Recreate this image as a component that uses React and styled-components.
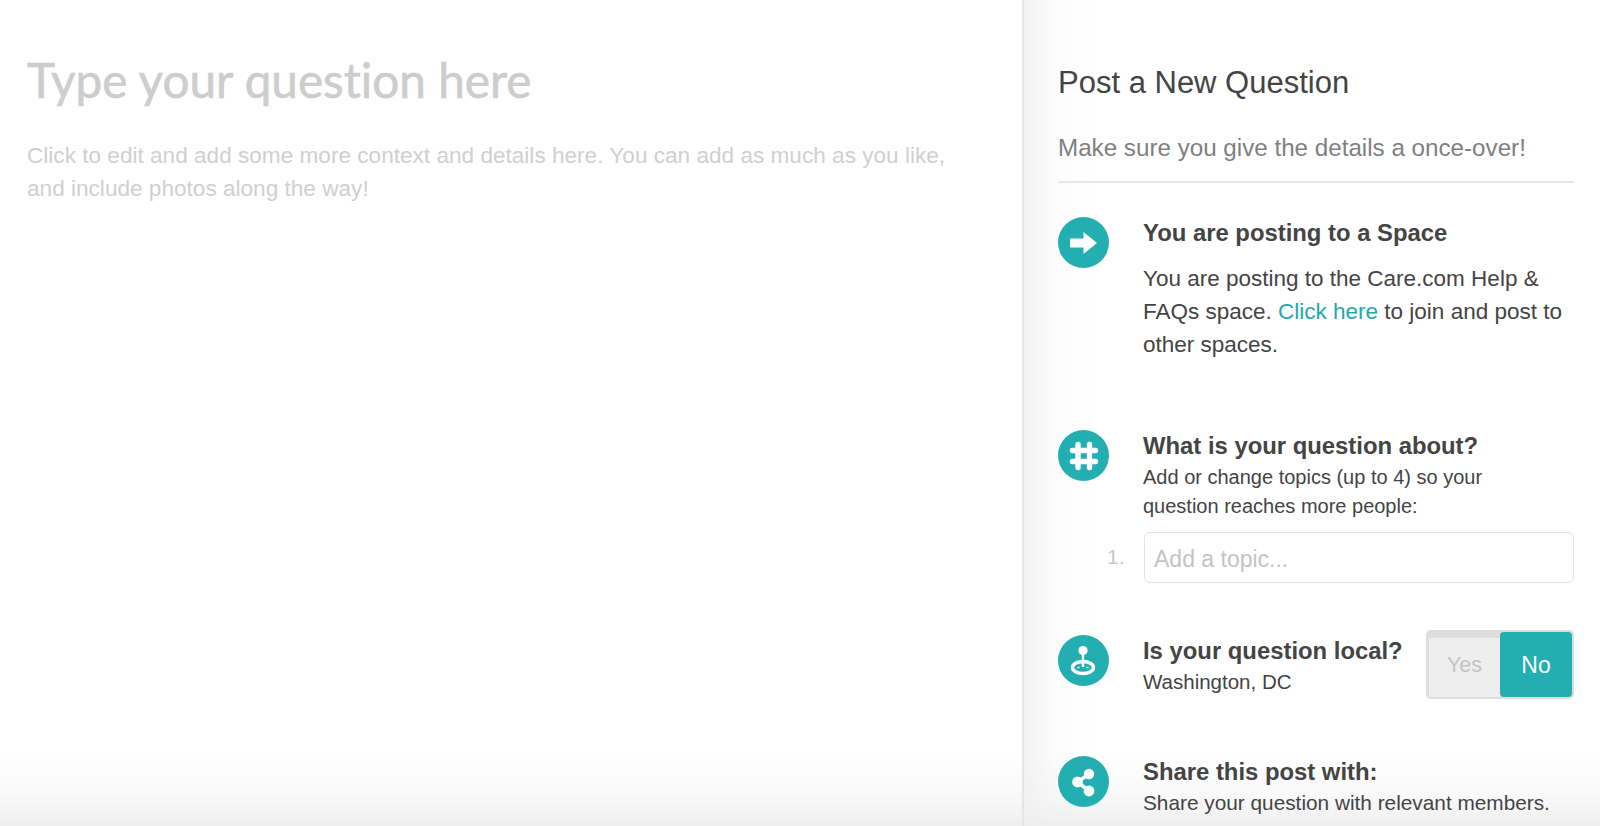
import React from "react";
import styled, { createGlobalStyle } from "styled-components";

const GlobalStyle = createGlobalStyle`
  html, body {
    margin: 0;
    padding: 0;
    background: #fff;
  }
  body {
    font-family: "Liberation Sans", Arial, sans-serif;
  }
`;

const Page = styled.div`
  position: relative;
  display: flex;
  width: 1600px;
  height: 826px;
  overflow: hidden;
  background: #fff;
`;

const Editor = styled.main`
  width: 1022px;
  box-sizing: border-box;
  padding: 48px 60px 0 27px;
`;

const QuestionTitle = styled.h1`
  margin: 0;
  font-family: Lato, sans-serif;
  font-size: 47.7px;
  line-height: 64px;
  font-weight: 400;
  font-variant-ligatures: none;
  -webkit-text-stroke: 0.6px #cdcdcd;
  color: #cdcdcd;
`;

const QuestionDetails = styled.p`
  margin: 27px 0 0;
  font-size: 22.6px;
  line-height: 33px;
  color: #d0d0d0;
`;

const Sidebar = styled.aside`
  position: relative;
  z-index: 1;
  width: 578px;
  box-sizing: border-box;
  padding: 64px 26px 0 34px;
  border-left: 2px solid #e6e6e6;
  background: linear-gradient(to right, rgba(238, 238, 238, 0.7) 0, rgba(238, 238, 238, 0.2) 30px, rgba(255, 255, 255, 0) 70px);
`;

const SidebarTitle = styled.h2`
  margin: 0;
  font-size: 31px;
  line-height: 38px;
  font-weight: 400;
  color: #444;
`;

const SidebarHint = styled.p`
  margin: 31px 0 0;
  padding-bottom: 18px;
  font-size: 24.2px;
  line-height: 30px;
  color: #808080;
  border-bottom: 2px solid #e6e6e6;
`;

const Step = styled.section`
  display: grid;
  grid-template-columns: 51px 1fr;
  column-gap: 34px;
  margin-top: ${(p) => p.$top}px;
`;

const StepIcon = styled.div`
  width: 51px;
  height: 51px;
  border-radius: 50%;
  background: #23aeb2;
  svg {
    display: block;
  }
`;

const StepHeading = styled.h3`
  margin: 0;
  padding-top: 2px;
  font-size: 23.85px;
  line-height: 28px;
  font-weight: 700;
  color: #444;
`;

const StepText = styled.p`
  margin: ${(p) => p.$top || 3}px 0 0;
  max-width: ${(p) => p.$max || 430}px;
  font-size: ${(p) => p.$size || 20}px;
  line-height: ${(p) => p.$line || 28.5}px;
  color: #444;
`;

const Link = styled.a`
  color: #1fa9ad;
  text-decoration: none;
`;

const TopicRow = styled.div`
  position: relative;
  margin-top: 12px;
`;

const TopicNumber = styled.span`
  position: absolute;
  left: -36px;
  top: 11px;
  font-size: 21px;
  line-height: 28px;
  color: #c8c8c8;
`;

const TopicInput = styled.div`
  box-sizing: border-box;
  height: 51px;
  margin-left: 1px;
  padding-left: 9px;
  border: 1px solid #e3e3e3;
  border-radius: 6px;
  font-size: 23px;
  line-height: 52px;
  color: #c4c4c4;
  background: #fff;
`;

const LocalRow = styled.div`
  display: flex;
  justify-content: space-between;
  align-items: flex-start;
`;

const Toggle = styled.div`
  display: flex;
  justify-content: flex-end;
  box-sizing: border-box;
  width: 148px;
  height: 69px;
  margin-top: -5px;
  padding: 2px;
  border-radius: 5px;
  background: #dedede;
`;

const ToggleOff = styled.div`
  flex: 1;
  margin-top: 6px;
  margin-left: 1px;
  text-align: center;
  font-size: 21.5px;
  line-height: 55px;
  color: #c4c4c4;
  background: #eeeeee;
`;

const ToggleOn = styled.div`
  width: 72px;
  border-radius: 4px;
  text-align: center;
  font-size: 23px;
  line-height: 67px;
  color: #fff;
  background: #23aeb2;
`;

const BottomFade = styled.div`
  position: absolute;
  left: 0;
  right: 0;
  bottom: 0;
  height: 76px;
  pointer-events: none;
  background: linear-gradient(to bottom, rgba(238, 238, 238, 0) 0, rgba(238, 238, 238, 0.35) 45px, rgba(236, 236, 236, 0.85) 76px);
`;

const ArrowIcon = () => (
  <svg width="51" height="51" viewBox="0 0 51 51">
    <path d="M12 21.5h13.5V15L39 26 25.5 37v-6.5H12z" fill="#fff" />
  </svg>
);

const HashIcon = () => (
  <svg width="51" height="51" viewBox="0 0 51 51" fill="none" stroke="#fff" strokeWidth="5.4" strokeLinecap="round">
    <path d="M20 14.5v23M31.5 14.5v23M14.5 20.5h23M14.5 31.5h23" />
  </svg>
);

const PinIcon = () => (
  <svg width="51" height="51" viewBox="0 0 51 51">
    <circle cx="25" cy="15.5" r="4.6" fill="#fff" />
    <path d="M25 18v14" stroke="#fff" strokeWidth="2.4" />
    <ellipse cx="25" cy="32.5" rx="10.5" ry="6" fill="none" stroke="#fff" strokeWidth="3.4" />
    <path d="M19.5 32.5h2M28.5 32.5h2" stroke="#fff" strokeWidth="1.6" />
  </svg>
);

const ShareIcon = () => (
  <svg width="51" height="51" viewBox="0 0 51 51">
    <path d="M31 18L19.5 26 31 35" fill="none" stroke="#fff" strokeWidth="3.6" />
    <circle cx="31" cy="18" r="5.2" fill="#fff" />
    <circle cx="19.5" cy="26" r="5.4" fill="#fff" />
    <circle cx="31" cy="35" r="5.4" fill="#fff" />
  </svg>
);

export default function App() {
  return (
    <Page>
      <GlobalStyle />
      <BottomFade />
      <Editor>
        <QuestionTitle>Type your question here</QuestionTitle>
        <QuestionDetails>
          Click to edit and add some more context and details here. You can add as much as you like,
          and include photos along the way!
        </QuestionDetails>
      </Editor>
      <Sidebar>
        <SidebarTitle>Post a New Question</SidebarTitle>
        <SidebarHint>Make sure you give the details a once-over!</SidebarHint>

        <Step $top={34}>
          <StepIcon><ArrowIcon /></StepIcon>
          <div>
            <StepHeading>You are posting to a Space</StepHeading>
            <StepText $top={15} $size={22.5} $line={33}>
              You are posting to the Care.com Help &amp; FAQs space. <Link href="#">Click here</Link> to
              join and post to other spaces.
            </StepText>
          </div>
        </Step>

        <Step $top={69}>
          <StepIcon><HashIcon /></StepIcon>
          <div>
            <StepHeading>What is your question about?</StepHeading>
            <StepText $max={370}>Add or change topics (up to 4) so your question reaches more people:</StepText>
            <TopicRow>
              <TopicNumber>1.</TopicNumber>
              <TopicInput>Add a topic...</TopicInput>
            </TopicRow>
          </div>
        </Step>

        <Step $top={52}>
          <StepIcon><PinIcon /></StepIcon>
          <LocalRow>
            <div>
              <StepHeading>Is your question local?</StepHeading>
              <StepText $size={20.5}>Washington, DC</StepText>
            </div>
            <Toggle>
              <ToggleOff>Yes</ToggleOff>
              <ToggleOn>No</ToggleOn>
            </Toggle>
          </LocalRow>
        </Step>

        <Step $top={57}>
          <StepIcon><ShareIcon /></StepIcon>
          <div>
            <StepHeading>Share this post with:</StepHeading>
            <StepText $size={20.8}>Share your question with relevant members.</StepText>
          </div>
        </Step>
      </Sidebar>
    </Page>
  );
}
